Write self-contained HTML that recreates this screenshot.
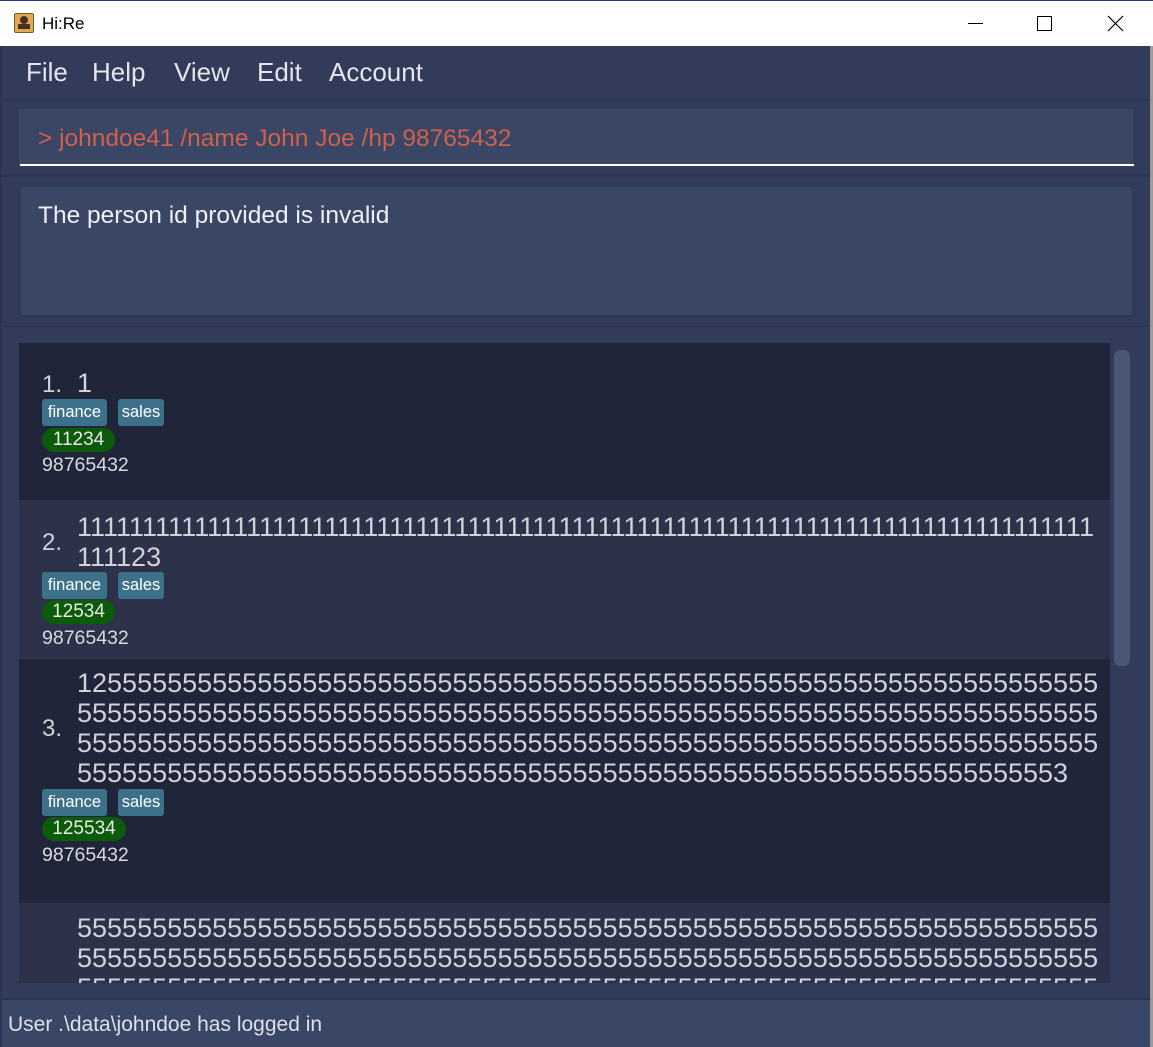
<!DOCTYPE html>
<html><head><meta charset="utf-8"><style>
*{margin:0;padding:0;box-sizing:border-box}
body{width:1153px;height:1047px;overflow:hidden;background:#323c5a;font-family:"Liberation Sans",sans-serif;position:relative}
.a{position:absolute;white-space:nowrap}
.big{font-size:27px;line-height:30px;color:#d0d2da}
.num{font-size:24px;color:#d0d2da}
.tag{position:absolute;height:27px;background:#3d7189;border-radius:3px;color:#fff;font-size:16.5px;line-height:27px;text-align:center}
.pill{position:absolute;height:24px;background:#0b5b0b;border-radius:12px;color:#e8e8e8;font-size:19px;line-height:24px;text-align:center}
.ph{position:absolute;font-size:19.5px;color:#d8d8de;line-height:22px}
</style></head><body>
<div class="a" style="left:0;top:0;width:1153px;height:46px;background:#fff;border-top:1px solid #2a3b80"></div>
<div class="a" style="left:14px;top:13px;width:20px;height:20px;background:#e0a850;border:1px solid #7a5a2a;border-radius:2px"></div>
<div class="a" style="left:20px;top:16px;width:8px;height:8px;background:#4a3020;border-radius:50%"></div>
<div class="a" style="left:18px;top:24px;width:12px;height:5px;background:#4a3020"></div>
<div class="a" style="left:42px;top:14px;font-size:17px;color:#000">Hi:Re</div>
<div class="a" style="left:968px;top:23px;width:15px;height:1px;background:#000"></div>
<div class="a" style="left:1037px;top:16px;width:15px;height:15px;border:1px solid #000"></div>
<svg class="a" style="left:1107px;top:15px" width="17" height="17"><path d="M1 1L16 16M16 1L1 16" stroke="#000" stroke-width="1.2"/></svg>
<div class="a" style="left:0;top:46px;width:2px;height:1001px;background:#2a3556"></div>
<div class="a" style="left:1150px;top:46px;width:3px;height:1001px;background:#9a9a9a"></div>
<div class="a" style="left:26px;top:57px;font-size:26px;color:#e4e6ec">File</div>
<div class="a" style="left:92px;top:57px;font-size:26px;color:#e4e6ec">Help</div>
<div class="a" style="left:174px;top:57px;font-size:26px;color:#e4e6ec">View</div>
<div class="a" style="left:257px;top:57px;font-size:26px;color:#e4e6ec">Edit</div>
<div class="a" style="left:329px;top:57px;font-size:26px;color:#e4e6ec">Account</div>
<div class="a" style="left:2px;top:99px;width:1148px;height:2px;background:#2c3552"></div>
<div class="a" style="left:18px;top:108px;width:1116px;height:58px;background:#3a4666;border:1px solid #313c5a;border-bottom:none"></div>
<div class="a" style="left:20px;top:164px;width:1114px;height:2px;background:#fff"></div>
<div class="a" style="left:38px;top:125px;font-size:24.5px;color:#d0604a">&gt; johndoe41 /name John Joe /hp 98765432</div>
<div class="a" style="left:2px;top:174px;width:1148px;height:3px;background:#2c3552"></div>
<div class="a" style="left:19px;top:185px;width:1115px;height:132px;background:#3a4666;border:2px solid #2f3a58"></div>
<div class="a" style="left:38px;top:202px;font-size:24.5px;color:#eef0f4">The person id provided is invalid</div>
<div class="a" style="left:2px;top:325px;width:1148px;height:2px;background:#2c3552"></div>
<div class="a" style="left:19px;top:343px;width:1091px;height:157px;background:#20253a"></div>
<div class="a" style="left:19px;top:500px;width:1091px;height:159px;background:#2d3149"></div>
<div class="a" style="left:19px;top:659px;width:1091px;height:244px;background:#20253a"></div>
<div class="a" style="left:19px;top:903px;width:1091px;height:80px;background:#2d3149;overflow:hidden">
 <div class="a big" style="left:58px;top:10px">55555555555555555555555555555555555555555555555555555555555555555555<br>55555555555555555555555555555555555555555555555555555555555555555555<br>55555555555555555555555555555555555555555555555555555555555555555555</div>
</div>
<div class="a" style="left:1114px;top:350px;width:16px;height:316px;background:#4c5778;border-radius:6px"></div>

<div class="a num" style="left:42px;top:371px">1.</div>
<div class="a big" style="left:77px;top:368px">1</div>
<div class="tag" style="left:42px;top:399px;width:65px">finance</div>
<div class="tag" style="left:118px;top:399px;width:46px">sales</div>
<div class="pill" style="left:42px;top:428px;width:73px">11234</div>
<div class="ph" style="left:42px;top:454px">98765432</div>

<div class="a num" style="left:42px;top:529px">2.</div>
<div class="a big" style="left:77px;top:512px">111111111111111111111111111111111111111111111111111111111111111111111111111111<br>111123</div>
<div class="tag" style="left:42px;top:572px;width:65px">finance</div>
<div class="tag" style="left:118px;top:572px;width:46px">sales</div>
<div class="pill" style="left:42px;top:600px;width:73px">12534</div>
<div class="ph" style="left:42px;top:627px">98765432</div>

<div class="a num" style="left:42px;top:715px">3.</div>
<div class="a big" style="left:77px;top:668px">12555555555555555555555555555555555555555555555555555555555555555555<br>55555555555555555555555555555555555555555555555555555555555555555555<br>55555555555555555555555555555555555555555555555555555555555555555555<br>555555555555555555555555555555555555555555555555555555555555555553</div>
<div class="tag" style="left:42px;top:789px;width:65px">finance</div>
<div class="tag" style="left:118px;top:789px;width:46px">sales</div>
<div class="pill" style="left:42px;top:817px;width:84px">125534</div>
<div class="ph" style="left:42px;top:844px">98765432</div>

<div class="a" style="left:2px;top:998px;width:1148px;height:2px;background:#2a3350"></div>
<div class="a" style="left:2px;top:1000px;width:1148px;height:47px;background:#394666"></div>
<div class="a" style="left:8px;top:1013px;font-size:21px;color:#dde0e8">User .\data\johndoe has logged in</div>
</body></html>
